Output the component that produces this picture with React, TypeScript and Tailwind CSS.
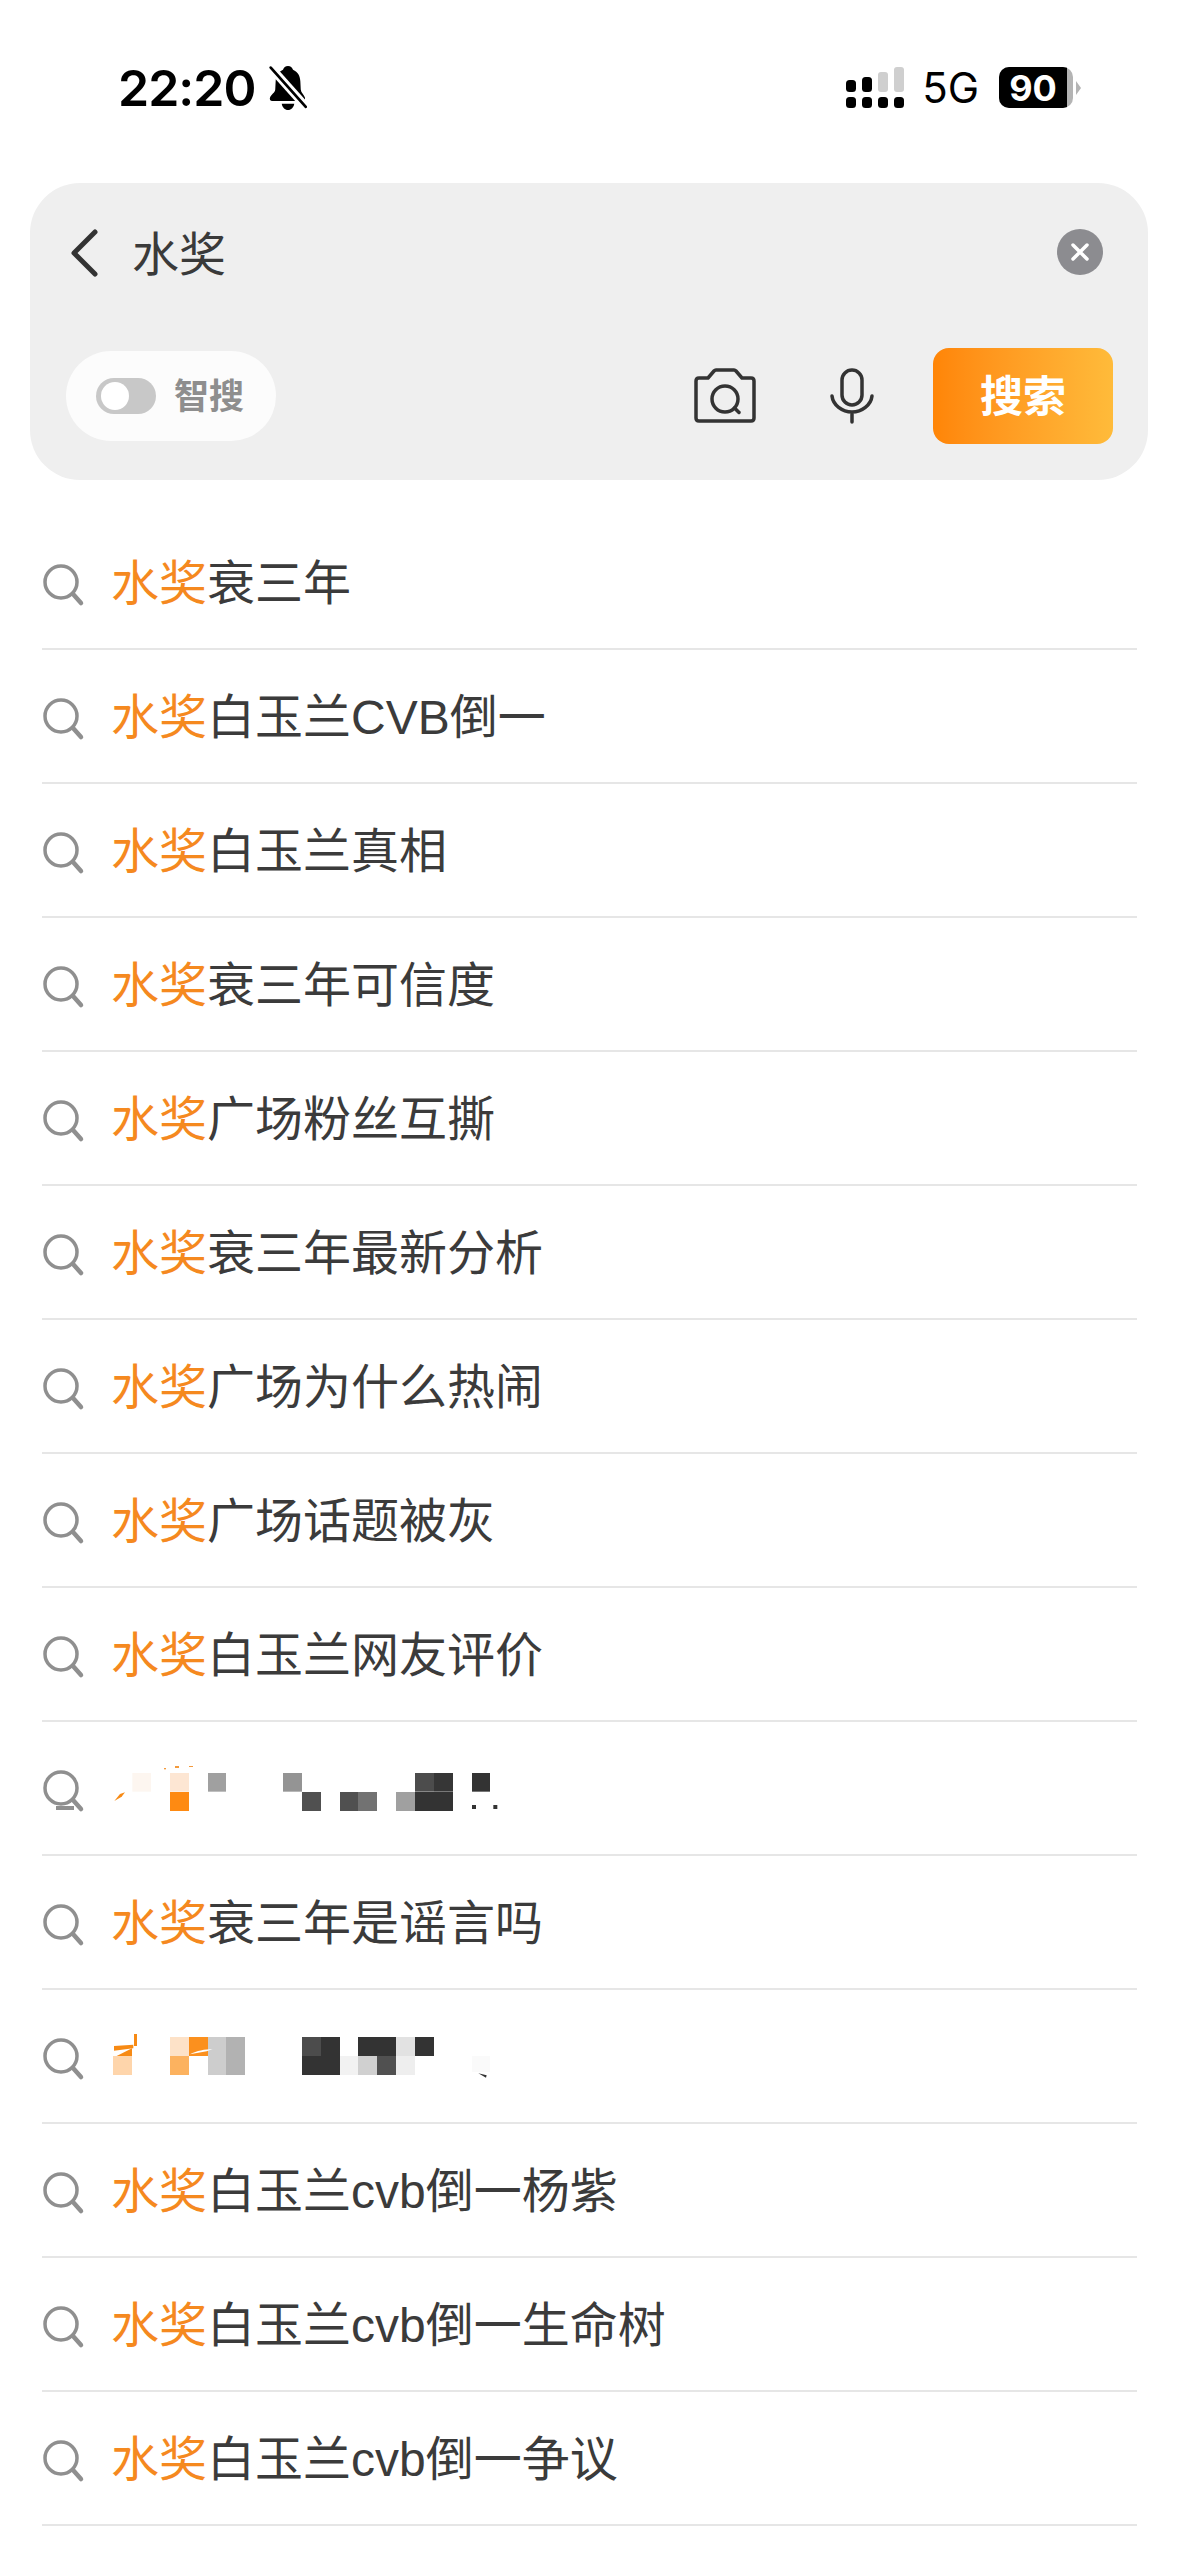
import React from 'react';

const CJK = '"Liberation Sans", "Noto Sans CJK SC", "Noto Sans", sans-serif';

type Cell = [number, number, number, number, string];

// Blurred-out rows of the reference, in 3x coordinates of the row.
const MOSAIC_A: Cell[] = [
  [337, 99, 56, 56, '#fdf6f0'],
  [450, 99, 57, 56, '#fde6d3'],
  [450, 156, 57, 57, '#fe8a12'],
  [564, 99, 54, 56, '#a0a0a0'],
  [789, 99, 57, 56, '#949494'],
  [846, 156, 57, 57, '#505050'],
  [960, 156, 54, 57, '#505050'],
  [1014, 156, 57, 57, '#727272'],
  [1128, 156, 57, 57, '#a0a0a0'],
  [1185, 99, 57, 56, '#4c4c4c'],
  [1242, 99, 57, 56, '#363636'],
  [1185, 156, 114, 57, '#333333'],
  [1356, 99, 54, 56, '#333333'],
  [1356, 195, 12, 12, '#333333'],
  [1420, 195, 12, 12, '#333333'],
  [432, 84, 6, 4, '#f39a3c'],
  [465, 78, 12, 6, '#f39a3c'],
  [507, 78, 12, 3, '#f39a3c'],
];

const MOSAIC_B: Cell[] = [
  [279, 138, 57, 57, '#fed5ab'],
  [342, 72, 9, 36, '#f78a14'],
  [450, 81, 57, 57, '#fde2c8'],
  [507, 81, 57, 57, '#fb901e'],
  [450, 138, 57, 57, '#fcb25f'],
  [564, 81, 54, 114, '#cdcdcd'],
  [618, 81, 57, 114, '#b2b2b2'],
  [846, 81, 57, 57, '#4c4c4c'],
  [903, 81, 57, 57, '#333333'],
  [846, 138, 114, 57, '#333333'],
  [960, 138, 54, 57, '#f2f2f2'],
  [1014, 81, 114, 57, '#333333'],
  [1014, 138, 57, 57, '#d0d0d0'],
  [1071, 138, 57, 57, '#505050'],
  [1128, 81, 57, 57, '#e2e2e2'],
  [1128, 138, 57, 57, '#eeeeee'],
  [1185, 81, 57, 57, '#333333'],
  [1356, 138, 54, 48, '#fafafa'],
];

const ROWS: (string | Cell[])[] = [
  '衰三年',
  '白玉兰CVB倒一',
  '白玉兰真相',
  '衰三年可信度',
  '广场粉丝互撕',
  '衰三年最新分析',
  '广场为什么热闹',
  '广场话题被灰',
  '白玉兰网友评价',
  MOSAIC_A,
  '衰三年是谣言吗',
  MOSAIC_B,
  '白玉兰cvb倒一杨紫',
  '白玉兰cvb倒一生命树',
  '白玉兰cvb倒一争议',
];

const SearchIcon = ({ smudge }: { smudge?: boolean }) => (
  <svg width="44" height="50" viewBox="0 -6 44 50" fill="none" className="shrink-0">
    <circle cx="19" cy="19" r="16" stroke="#8f8f8f" strokeWidth="3.5" />
    <path d="M31 31 L39 40" stroke="#8f8f8f" strokeWidth="4.5" strokeLinecap="round" />
    {smudge && <rect x="14" y="37" width="18" height="4" fill="#8f8f8f" />}
  </svg>
);

const BellOff = () => (
  <svg width="38" height="46" viewBox="0 0 36 44" className="shrink-0">
    <path
      d="M18 1c2.500 0 4 1.500 4.800 3.500 4.700 2 6.700 6 7 11l.4 8c.2 3 3 5 4 7.500.5 1.800-.5 3.500-2.400 3.500H3c-1.900 0-2.900-1.700-2.200-3.500 1-2.500 4.800-4.500 5-7.500l.4-8c.3-5 2.300-9 7-11C14 2.500 15.500 1 18 1z"
      fill="#000"
    />
    <path d="M12 37h12c-.5 3.500-3 6-6 6s-5.500-2.500-6-6z" fill="#000" />
    <path d="M-2 -1.500 37 42" stroke="#fff" strokeWidth="8" />
    <path d="M1.500 2.500 35 40" stroke="#000" strokeWidth="2.600" strokeLinecap="round" />
  </svg>
);

const Signal = () => (
  <svg width="58" height="41" viewBox="0 0 58 41" className="shrink-0">
    <rect x="0" y="30" width="10" height="11" rx="3.500" fill="#000" />
    <rect x="16" y="30" width="10" height="11" rx="3.500" fill="#000" />
    <rect x="32" y="30" width="10" height="11" rx="3.500" fill="#000" />
    <rect x="48" y="30" width="10" height="11" rx="3.500" fill="#000" />
    <rect x="0" y="13" width="10" height="12" rx="3.500" fill="#000" />
    <rect x="16" y="10" width="10" height="15" rx="3.500" fill="#000" />
    <rect x="32" y="5" width="10" height="20" rx="3" fill="#cfcfcf" />
    <rect x="48" y="0" width="10" height="25" rx="3" fill="#cfcfcf" />
  </svg>
);

const Battery = () => (
  <div className="flex items-center">
    <div className="flex h-[41px] w-[74px] overflow-hidden rounded-[10px] bg-[#b4b4b4]">
      <div
        className="flex h-full w-[68px] items-center justify-center bg-black text-[36px] font-bold text-white"
        style={{ fontFamily: 'Inter, sans-serif' }}
      >
        90
      </div>
    </div>
    <svg width="5" height="14" viewBox="0 0 5 14" className="ml-[3px]">
      <path d="M0 0 L5 7 L0 14 Z" fill="#b4b4b4" />
    </svg>
  </div>
);

const StatusBar = () => (
  <div className="flex h-[183px] items-start justify-between pl-[118px] pr-[98px] pt-[67px]">
    <div className="flex h-[41px] items-center gap-[14px]">
      <span
        className="text-[50px] font-semibold leading-none tracking-[-1px] text-black"
        style={{ fontFamily: 'Inter, sans-serif' }}
      >
        22:20
      </span>
      <BellOff />
    </div>
    <div className="flex h-[41px] items-center">
      <Signal />
      <span
        className="ml-[18px] mr-[20px] text-[42px] leading-none text-black"
        style={{ fontFamily: 'Inter, sans-serif' }}
      >
        5G
      </span>
      <Battery />
    </div>
  </div>
);

const SearchCard = () => (
  <div className="ml-[30px] mr-[31px] h-[297px] rounded-[50px] bg-[#efefef]">
    <div className="flex h-[140px] items-center pl-[40px] pr-[45px]">
      <svg width="28" height="48" viewBox="0 0 28 48" fill="none" className="shrink-0">
        <path
          d="M25 3 L4 24 L25 45"
          stroke="#333"
          strokeWidth="5"
          strokeLinecap="round"
          strokeLinejoin="round"
        />
      </svg>
      <span className="ml-[34px] mt-[3px] text-[47px] leading-none text-[#3a3a3a]">水奖</span>
      <svg width="46" height="46" viewBox="0 0 46 46" className="mb-[2px] ml-auto shrink-0">
        <circle cx="23" cy="23" r="23" fill="#8c8c90" />
        <path d="M16 16 L30 30 M30 16 L16 30" stroke="#fff" strokeWidth="3.500" strokeLinecap="round" />
      </svg>
    </div>
    <div className="flex items-center pl-[36px] pr-[35px] pt-[25px]">
      <div className="flex h-[90px] w-[210px] items-center rounded-full bg-[#fcfcfc] pl-[30px]">
        <div className="flex h-[36px] w-[60px] items-center rounded-full bg-[#c8c8c8] pl-[5px]">
          <div className="h-[28px] w-[28px] rounded-full bg-white" />
        </div>
        <span className="ml-[18px] text-[35px] font-semibold leading-none text-[#8e8e8e]">智搜</span>
      </div>
      <svg width="62" height="56" viewBox="0 0 62 56" fill="none" className="ml-auto shrink-0">
        <path
          d="M5 10 h9 l6 -7 c.6-.7 1.400-1 2-1 h18 c.6 0 1.400.3 2 1 l6 7 h9 c2 0 3 1 3 3 v37 c0 2-1 3-3 3 H5 c-2 0-3-1-3-3 V13 c0-2 1-3 3-3 z"
          stroke="#333"
          strokeWidth="3.500"
          strokeLinejoin="round"
        />
        <circle cx="31" cy="31" r="13" stroke="#333" strokeWidth="3.500" />
        <path d="M40.500 40 L45 44.500" stroke="#333" strokeWidth="3.500" strokeLinecap="round" />
      </svg>
      <svg width="44" height="56" viewBox="0 0 44 56" fill="none" className="ml-[74px] shrink-0">
        <rect x="12" y="2" width="20" height="35" rx="10" stroke="#333" strokeWidth="3.500" />
        <path
          d="M2 28 c1 9 10 16 20 16 s19-7 20-16 M22 44 v10"
          stroke="#333"
          strokeWidth="3.500"
          strokeLinecap="round"
        />
      </svg>
      <button className="ml-[59px] flex h-[96px] w-[180px] items-center justify-center rounded-[16px] bg-gradient-to-r from-[#ff8506] to-[#ffbb3a] pt-[2px] text-[43px] font-semibold leading-none text-white">
        搜索
      </button>
    </div>
  </div>
);

const Row = ({ item, index }: { item: string | Cell[]; index: number }) => (
  <div className="mx-[42px] flex h-[134px] items-center border-b-2 border-[#e6e6e6]">
    <SearchIcon smudge={index === 9} />
    {typeof item === 'string' ? (
      <span className="ml-[25px] mt-[3px] text-[48px] leading-none text-[#3b3b3b]">
        <span className="text-[#f5891f]">水奖</span>
        {item}
      </span>
    ) : (
      <svg
        width="420"
        height="134"
        viewBox={index === 9 ? '276 -57 1260 402' : '276 -63 1260 402'}
        className="ml-[26px] shrink-0"
      >
        {item.map(([x, y, w, h, fill]) => (
          <rect key={`${x}-${y}`} x={x} y={y} width={w} height={h} fill={fill} />
        ))}
        {index === 9 ? (
          <path d="M283 183 L305 170 L315 157 L300 162 Z" fill="#f78a14" />
        ) : (
          <>
            <path d="M282 108 L340 104 L340 115 L282 122 Z" fill="#f78a14" />
            <path d="M290 138 L336 115 L336 138 Z" fill="#f78a14" />
            <path d="M510 133 C530 122 555 118 578 117 L560 124 Z" fill="#ffffff" />
            <path d="M1375 190 L1400 196 L1398 203 Z" fill="#333333" />
          </>
        )}
      </svg>
    )}
  </div>
);

export default function App() {
  return (
    <div className="h-[2556px] w-[1179px] overflow-hidden bg-white" style={{ fontFamily: CJK }}>
      <StatusBar />
      <SearchCard />
      <div className="pt-[36px]">
        {ROWS.map((item, i) => (
          <Row key={i} item={item} index={i} />
        ))}
      </div>
    </div>
  );
}
